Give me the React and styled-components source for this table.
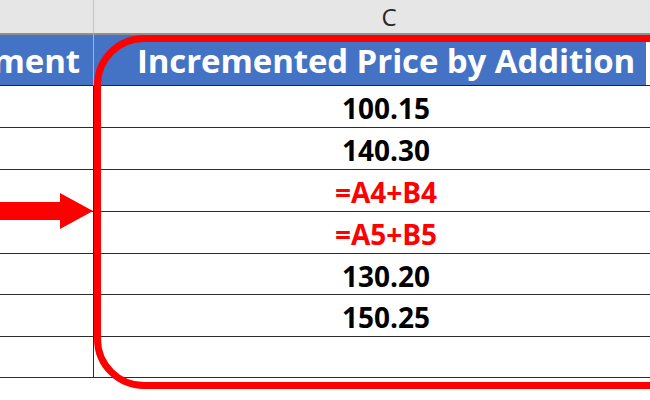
import React from "react";
import styled, { createGlobalStyle } from "styled-components";

const GlobalStyle = createGlobalStyle`
  html, body {
    margin: 0;
    padding: 0;
    background: #ffffff;
    overflow: hidden;
  }
`;

// Sheet layout
const Sheet = styled.div`
  position: relative;
  width: 650px;
  height: 400px;
  display: grid;
  grid-template-columns: 94px 552px 32px;
  grid-template-rows: 35px 51px repeat(4, 42px) 41px 42px 41px;
  font-family: "Open Sans", "Noto Sans", sans-serif;
`;

const ColHead = styled.div`
  grid-column: span ${props => props.$span || 1};
  box-sizing: border-box;
  background: #e6e6e6;
  border-bottom: 2px solid #8f8f8f;
  border-right: ${props => (props.$edge ? "1px solid #c4c4c4" : "none")};
  display: flex;
  align-items: center;
  justify-content: center;
  padding-left: ${props => (props.$span ? "6px" : "0")};
  font-size: 24px;
  font-weight: 400;
  color: #262626;
`;

const TitleCell = styled.div`
  box-sizing: border-box;
  background: ${props => (props.$blank ? "#ffffff" : "#4472c4")};
  border-bottom: 1px solid #262626;
  border-right: ${props => (props.$edge ? "1px solid #9fb6e0" : "none")};
  display: flex;
  align-items: center;
  justify-content: ${props => props.$align || "center"};
  padding-right: ${props => (props.$align ? "13px" : "0")};
  padding-left: ${props => (props.$align ? "0" : "32px")};
  padding-top: 1px;
  overflow: hidden;
  white-space: nowrap;
  color: #ffffff;
  font-size: 33px;
  font-weight: 700;
  letter-spacing: -0.1px;
`;

const Cell = styled.div`
  grid-column: span ${props => props.$span || 1};
  box-sizing: border-box;
  border-bottom: 1px solid #2b2b2b;
  border-right: ${props => (props.$edge ? "1px solid #2b2b2b" : "none")};
  display: flex;
  align-items: center;
  justify-content: center;
  padding-top: 3px;
  font-size: 28px;
  font-weight: 700;
  color: ${props => (props.$formula ? "#ff0000" : "#000000")};
`;

// overlays drawn on top of the grid
const Highlight = styled.div`
  position: absolute;
  left: 94px;
  top: 35px;
  width: 640px;
  height: 354px;
  box-sizing: border-box;
  border: 7px solid #ff0000;
  border-radius: 50px;
  pointer-events: none;
`;

const Arrow = styled.svg`
  position: absolute;
  left: 0;
  top: 193px;
`;

const rows = [
  { value: "100.15" },
  { value: "140.30" },
  { value: "=A4+B4", formula: true },
  { value: "=A5+B5", formula: true },
  { value: "130.20" },
  { value: "150.25" },
  { value: "" }
];

export default function App() {
  return (
    <>
      <GlobalStyle />
      <Sheet>
        <ColHead $edge />
        <ColHead $span={2}>C</ColHead>

        <TitleCell $edge $align="flex-end">Increment</TitleCell>
        <TitleCell>Incremented Price by Addition</TitleCell>
        <TitleCell $blank />

        {rows.map((row, i) => (
          <React.Fragment key={i}>
            <Cell $edge />
            <Cell $span={2} $formula={row.formula}>
              {row.value}
            </Cell>
          </React.Fragment>
        ))}

        <Highlight />
        <Arrow width="94" height="36" viewBox="0 0 94 36">
          <polygon
            points="0,9 60,9 60,0 93,18 60,36 60,27 0,27"
            fill="#ff0000"
          />
        </Arrow>
      </Sheet>
    </>
  );
}
